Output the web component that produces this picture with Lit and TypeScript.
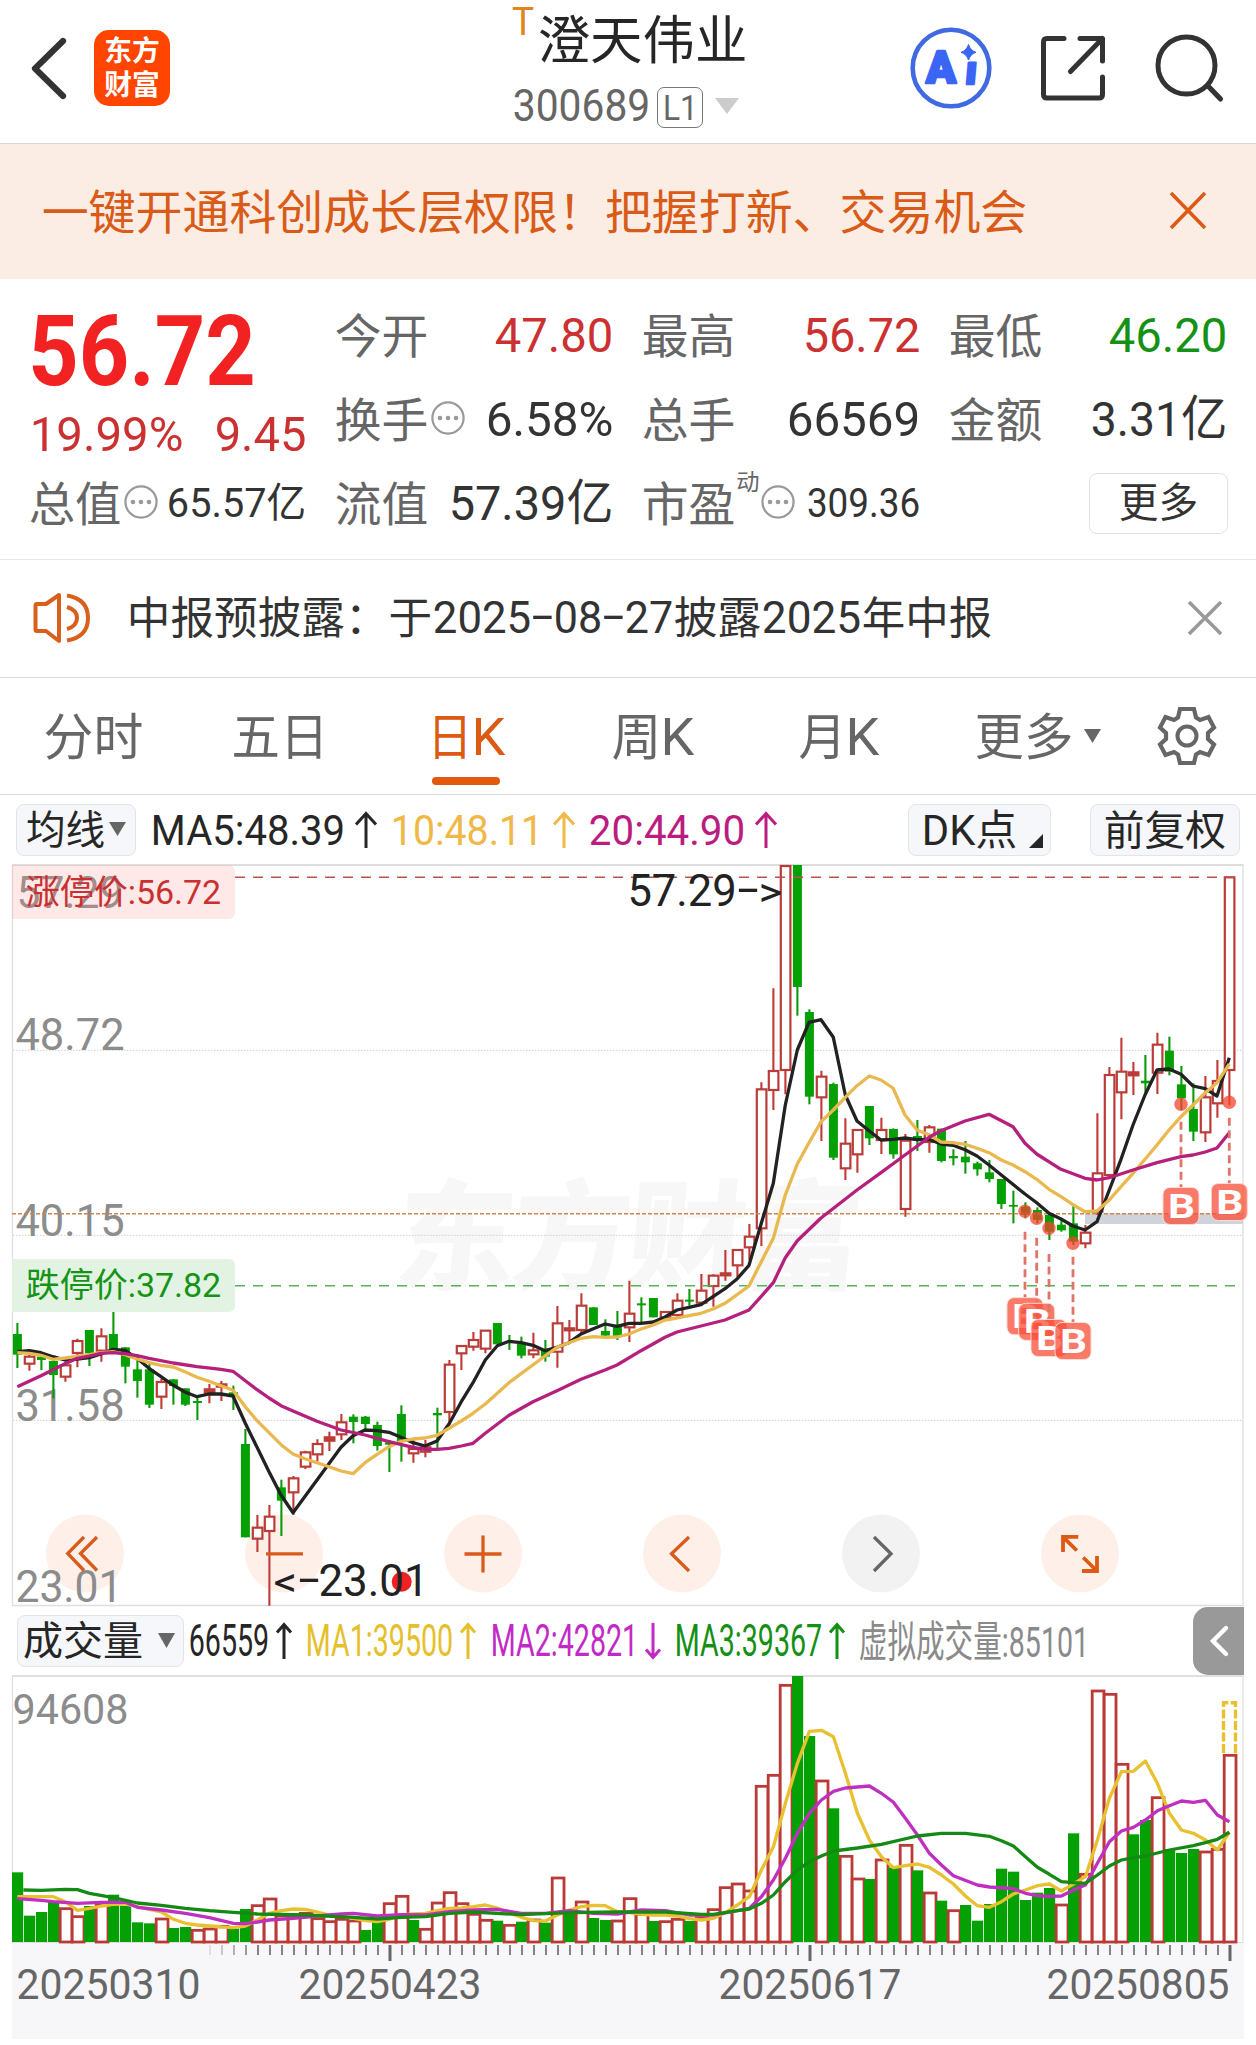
import { LitElement, html, svg, css } from "lit";
import { customElement } from "lit/decorators.js";

/** Single line of text set to an exact width; the box height is the cap height. */
const fit = (text: string, width: number, size: number, cls = "") => {
  const cjk = /^[\u3001-\uffef]+$/.test(text);
  const h = size * (cjk ? 0.76 : 0.711);
  return html`<svg class="fit ${cls}" width=${width} height=${h}>
    <text x=${-size * 0.028} y=${h} font-size=${size} textLength=${width + size * 0.055} lengthAdjust="spacingAndGlyphs">${text}</text>
  </svg>`;
};

const base = css`
  * { box-sizing: border-box; }
  svg { display: block; flex: none; overflow: visible; }
  text { font-family: Roboto, "Noto Sans CJK SC", sans-serif; }
  .fit { fill: currentColor; }
`;

type Pt = [number, number];
const X0 = 17.4;
const STEP = 12;

// colour, body top, body bottom, high, low
type Candle = ["r" | "g", number, number, number, number];
const part = (oy: number, rows: Candle[]): Candle[] =>
  rows.map(([c, a, b, h, l]) => [c, oy + a / 3, oy + b / 3, oy + h / 3, oy + l / 3]);

const candles: Candle[] = [
  ...part(1260, [
    ["g", 222, 284, 189, 324], ["r", 290, 311, 284, 332], ["g", 290, 300, 285, 330], ["g", 303, 345, 300, 415],
    ["r", 316, 350, 305, 365], ["r", 243, 279, 236, 322], ["g", 210, 280, 210, 318], ["r", 229, 272, 205, 305],
    ["g", 222, 268, 138, 270], ["g", 262, 320, 262, 370], ["g", 328, 363, 290, 413], ["g", 328, 434, 310, 444],
    ["r", 366, 410, 356, 447], ["g", 358, 378, 358, 434], ["g", 385, 434, 385, 438], ["g", 423, 429, 408, 480],
    ["r", 388, 398, 372, 430], ["r", 373, 380, 363, 423], ["g", 397, 409, 377, 450], ["g", 552, 832, 507, 832],
    ["r", 803, 836, 765, 876], ["r", 770, 813, 735, 1037], ["g", 682, 722, 659, 828], ["r", 655, 697, 648, 765],
    ["r", 577, 620, 572, 627], ["r", 552, 583, 538, 605], ["r", 532, 542, 515, 573], ["r", 487, 523, 462, 540],
    ["g", 470, 486, 463, 550], ["g", 470, 492, 468, 508], ["g", 495, 558, 485, 572], ["g", 547, 554, 540, 636],
    ["g", 462, 544, 436, 605],
  ]),
  ...part(1140, [
    ["r", 927, 940, 895, 968], ["r", 922, 935, 900, 952], ["g", 819, 826, 803, 930], ["r", 674, 816, 660, 855],
    ["r", 618, 640, 616, 690], ["r", 600, 620, 576, 632], ["r", 572, 626, 570, 640], ["g", 549, 613, 549, 613],
    ["g", 603, 609, 585, 630], ["g", 612, 647, 590, 655], ["r", 631, 643, 578, 655], ["g", 628, 650, 600, 665],
    ["r", 550, 635, 498, 683], ["r", 565, 571, 540, 607], ["r", 497, 570, 460, 580], ["g", 502, 555, 502, 555],
    ["g", 573, 587, 538, 590], ["g", 560, 590, 513, 600], ["r", 521, 562, 422, 606], ["g", 490, 496, 472, 550],
    ["g", 474, 532, 474, 532], ["r", 516, 534, 516, 540], ["r", 482, 525, 460, 530], ["g", 479, 485, 447, 497],
    ["r", 452, 488, 402, 498], ["r", 407, 438, 403, 500], ["r", 400, 406, 330, 422], ["r", 330, 376, 328, 410],
    ["r", 290, 322, 252, 360],
  ]),
  ...part(850, [
    ["r", 718, 1135, 697, 1188], ["r", 663, 720, 415, 780], ["r", 48, 660, 46, 733], ["g", 45, 411, 45, 497],
    ["g", 486, 740, 478, 763], ["r", 680, 742, 662, 873], ["g", 702, 923, 698, 930], ["r", 881, 955, 805, 990],
    ["r", 840, 913, 838, 968], ["g", 768, 865, 768, 885], ["r", 840, 870, 803, 912], ["g", 837, 913, 835, 926],
    ["r", 872, 1077, 852, 1100], ["g", 858, 865, 810, 903], ["r", 832, 876, 825, 908], ["g", 836, 933, 836, 937],
    ["g", 918, 925, 898, 946], ["g", 920, 937, 873, 971], ["g", 940, 958, 935, 977], ["g", 967, 987, 930, 997],
    ["g", 987, 1062, 987, 1077], ["g", 1065, 1070, 1022, 1120], ["g", 1070, 1095, 1057, 1105], ["g", 1080, 1110, 1072, 1120],
    ["g", 1095, 1145, 1090, 1170], ["g", 1124, 1141, 1105, 1145], ["g", 1120, 1175, 1068, 1185], ["r", 1148, 1180, 1125, 1195],
    ["r", 970, 1085, 790, 1095], ["r", 675, 975, 651, 985], ["r", 665, 727, 563, 808], ["r", 667, 676, 636, 735],
    ["g", 692, 700, 615, 728], ["r", 584, 668, 548, 732], ["g", 602, 665, 560, 676], ["g", 703, 745, 648, 780],
    ["g", 777, 845, 700, 873], ["r", 742, 847, 678, 876], ["r", 693, 760, 630, 803], ["r", 82, 660, 82, 765],
  ]),
];

const seg = (ox: number, oy: number, pts: Pt[]): Pt[] => pts.map(([x, y]) => [ox + x / 3, oy + y / 3]);

const ma5: Pt[] = [
  ...seg(0, 1260, [[52, 275], [88, 272], [123, 278], [159, 290], [195, 300], [232, 297], [268, 293], [303, 282], [339, 268], [375, 271], [411, 295], [447, 325], [483, 350], [520, 376], [555, 396], [591, 410], [627, 402], [663, 402], [699, 408], [736, 490], [807, 635], [843, 705], [879, 758], [951, 660], [1023, 562], [1059, 527], [1095, 510], [1131, 512], [1167, 517], [1203, 532]]),
  ...seg(400, 1140, [[39, 908], [75, 918], [111, 903], [147, 852], [184, 785], [219, 728], [256, 660], [292, 617], [327, 604], [363, 608], [399, 616], [435, 632], [471, 622], [507, 608], [543, 582], [580, 566], [615, 552], [651, 559], [687, 550], [723, 550], [760, 546], [795, 531], [831, 510], [867, 502], [903, 494], [939, 470], [975, 446], [1012, 416]]),
  ...seg(740, 850, [[27, 1246], [64, 1120], [100, 1000], [136, 765], [172, 600], [207, 517], [243, 509], [280, 562], [316, 735], [351, 813], [388, 843], [423, 870], [459, 868], [495, 864], [531, 869], [567, 868], [603, 882], [639, 886], [675, 899], [711, 918], [747, 945], [784, 975], [855, 1032], [890, 1058], [927, 1090], [963, 1107], [999, 1128], [1035, 1140], [1071, 1115], [1108, 1020], [1143, 928], [1179, 825], [1215, 735], [1251, 660], [1287, 657], [1323, 673], [1359, 708], [1396, 716], [1431, 738], [1468, 623]]),
];
const ma10: Pt[] = [
  ...seg(0, 1260, [[52, 278], [88, 280], [123, 286], [159, 298], [195, 294], [232, 289], [268, 284], [303, 278], [339, 275], [375, 284], [411, 297], [447, 308], [483, 316], [520, 321], [555, 335], [591, 352], [627, 364], [663, 377], [699, 391], [736, 440], [771, 482], [807, 518], [843, 554], [879, 582], [915, 596], [951, 608], [987, 620], [1023, 633], [1059, 641], [1095, 608], [1131, 583], [1167, 560], [1203, 544]]),
  ...seg(400, 1140, [[39, 897], [75, 894], [111, 886], [147, 865], [184, 843], [219, 820], [256, 792], [327, 728], [435, 648], [471, 622], [507, 608], [543, 595], [580, 590], [615, 592], [651, 591], [687, 582], [723, 567], [760, 555], [795, 540], [831, 534], [867, 527], [903, 520], [939, 507], [975, 490]]),
  ...seg(740, 850, [[27, 1308], [64, 1235], [100, 1165], [136, 1035], [172, 942], [207, 878], [243, 815], [280, 780], [316, 742], [351, 707], [388, 678], [423, 690], [459, 714], [495, 795], [531, 840], [567, 854], [603, 876], [639, 878], [675, 883], [711, 895], [747, 908], [784, 930], [819, 945], [855, 965], [890, 988], [927, 1018], [963, 1040], [999, 1064], [1035, 1085], [1071, 1083], [1108, 1050], [1143, 1010], [1179, 970], [1215, 928], [1251, 885], [1287, 840], [1323, 800], [1359, 765], [1396, 728], [1431, 698], [1468, 642]]),
];
const ma20: Pt[] = [
  ...seg(0, 1260, [[52, 380], [123, 347], [195, 311], [232, 295], [268, 288], [303, 280], [339, 278], [375, 281], [411, 287], [447, 295], [520, 309], [591, 320], [663, 328], [699, 334], [736, 362], [771, 389], [807, 414], [843, 437], [879, 453], [951, 484], [1023, 510], [1095, 525], [1167, 545]]),
  ...seg(400, 1140, [[39, 922], [75, 928], [111, 928], [147, 925], [184, 918], [219, 910], [256, 880], [327, 826], [399, 785], [471, 752], [543, 718], [615, 690], [651, 675], [723, 632], [795, 592], [831, 576], [903, 558], [975, 540]]),
  ...seg(740, 850, [[27, 1380], [100, 1298], [136, 1223], [172, 1172], [243, 1104], [351, 1020], [423, 968], [495, 915], [567, 862], [603, 842], [675, 813], [747, 793], [819, 830], [855, 880], [890, 912], [963, 958], [1035, 985], [1071, 990], [1108, 983], [1179, 960], [1251, 938], [1323, 920], [1359, 915], [1396, 906], [1431, 894], [1468, 848]]),
];

// Volume bar tops, measured in thirds of a pixel below y = 1600.
const volumeTops = [
  817, 947, 936, 905, 923, 947, 918, 912, 884, 918, 967, 970, 954, 984, 981, 988, 984, 976, 986, 927, 914, 894, 945, 948, 937, 953, 962, 955,
  960, 990, 966, 908, 886, 960, 985, 906, 875, 908, 940, 958, 962, 973, 965, 957, 968, 831, 937, 903, 954, 960, 960, 893, 940, 963, 962, 955,
  963, 950, 926, 860, 849, 870, 556, 523, 253, 228, 408, 540, 625, 766, 834, 837, 777, 803, 733, 811, 876, 902, 929, 915, 962, 912, 806, 815,
  900, 878, 864, 912, 700, 820, 270, 280, 490, 703, 660, 590, 747, 759, 747, 753, 745, 463,
];
const volumeGreen = new Set([
  0, 1, 2, 3, 6, 8, 9, 10, 11, 13, 14, 18, 19, 29, 30, 33, 40, 42, 44, 46, 48, 49, 53, 56, 65, 66, 68, 71, 73, 75, 77, 79, 80, 81, 82, 83, 84,
  85, 86, 88, 93, 94, 96, 97, 98,
]);
const vol = (pts: Pt[]): Pt[] => pts.map(([i, y]) => [X0 + i * STEP, 1600 + y / 3]);
const vma1 = vol([[0, 890], [3, 890], [4, 905], [5, 931], [6, 925], [7, 918], [8, 913], [9, 912], [10, 920], [11, 928], [12, 936], [13, 958], [14, 970], [15, 975], [16, 978], [17, 981], [18, 983], [19, 978], [20, 960], [21, 940], [22, 932], [23, 927], [24, 928], [25, 936], [26, 945], [27, 948], [28, 955], [29, 962], [30, 965], [31, 958], [32, 944], [33, 942], [34, 940], [35, 932], [36, 925], [37, 924], [38, 920], [39, 915], [40, 924], [41, 940], [42, 952], [43, 962], [44, 963], [45, 945], [46, 930], [47, 920], [48, 916], [49, 917], [50, 935], [51, 938], [52, 943], [53, 945], [54, 945], [55, 948], [56, 956], [57, 960], [58, 955], [59, 938], [60, 915], [61, 890], [62, 810], [63, 740], [64, 610], [65, 490], [66, 394], [67, 391], [68, 410], [69, 520], [70, 640], [71, 720], [72, 770], [73, 803], [74, 797], [75, 792], [76, 802], [77, 825], [78, 852], [79, 888], [80, 917], [81, 922], [82, 905], [83, 882], [84, 870], [85, 857], [86, 852], [87, 873], [88, 852], [89, 830], [90, 720], [91, 595], [92, 515], [93, 514], [94, 483], [95, 550], [96, 640], [97, 690], [98, 700], [99, 720], [100, 750], [101, 697]]);
const vma2 = vol([[0, 896], [2, 901], [3, 905], [5, 910], [7, 907], [9, 907], [10, 922], [12, 930], [14, 940], [16, 953], [18, 970], [19, 971], [20, 966], [21, 960], [23, 955], [25, 948], [27, 942], [28, 940], [30, 948], [32, 944], [34, 945], [36, 935], [38, 930], [40, 928], [42, 940], [44, 940], [46, 932], [48, 940], [50, 942], [52, 930], [54, 932], [56, 945], [58, 945], [60, 932], [61, 925], [62, 890], [63, 840], [64, 775], [65, 700], [66, 640], [67, 600], [68, 574], [69, 564], [71, 558], [72, 580], [73, 607], [74, 655], [75, 705], [76, 760], [77, 795], [78, 827], [80, 855], [81, 861], [83, 866], [84, 880], [85, 887], [86, 889], [87, 888], [88, 870], [89, 855], [90, 790], [91, 725], [92, 693], [93, 682], [94, 660], [95, 632], [96, 617], [97, 603], [98, 607], [99, 601], [100, 645], [101, 665]]);
const vma3 = vol([[0.5, 870], [2, 871], [4, 868], [5, 869], [6, 880], [8, 893], [10, 909], [12, 916], [14, 925], [16, 932], [18, 937], [20, 942], [24, 945], [28, 952], [30, 957], [32, 952], [34, 950], [36, 940], [38, 936], [42, 944], [46, 938], [50, 936], [54, 936], [57, 943], [58, 943], [60, 932], [61, 927], [62, 910], [63, 885], [64, 845], [65, 810], [66, 785], [67, 768], [68, 753], [70, 744], [72, 733], [75, 708], [77, 700], [79, 700], [81, 709], [82, 722], [83, 738], [84, 770], [85, 802], [86, 823], [87, 845], [88, 848], [89, 850], [90, 825], [91, 798], [92, 780], [93, 773], [94, 768], [96, 750], [98, 737], [99, 728], [100, 718], [101, 697]]);

const line = (pts: Pt[], color: string, w = 3.3) =>
  svg`<polyline points=${pts.map((p) => p.map((n) => n.toFixed(1)).join(",")).join(" ")} fill="none" stroke=${color} stroke-width=${w} stroke-linejoin="round" />`;

const label = (t: string, x: number, y: number, w: number, size: number, color: string) =>
  svg`<text x=${x - size * 0.035} y=${y} font-size=${size} textLength=${w + size * 0.07} lengthAdjust="spacingAndGlyphs" fill=${color}>${t}</text>`;

// dot x, dot y, dashed line start, badge top
const buys: [number, number, number, number][] = [
  [1025, 1211.3, 1231.7, 1297.7], [1036.7, 1218.3, 1237.7, 1303.3], [1049, 1228.3, 1254, 1319.5], [1073, 1243.3, 1256.7, 1322.5],
  [1181, 1104.3, 1121.7, 1187.5], [1229.3, 1102.3, 1117.7, 1183.5],
];

@customElement("price-chart")
export class PriceChart extends LitElement {
  static styles = [base, css`
    :host { display: block; }
    .mark { font-weight: 900; font-family: "Noto Sans CJK SC", sans-serif; }
    .b { font-weight: 700; }
  `];

  private candle([c, a, b, h, l]: Candle, i: number) {
    const x = X0 + i * STEP;
    if (c === "g") {
      return svg`<path d="M${x} ${h}V${l}" stroke="#0a9a0a" stroke-width="2.1" /><rect x=${x - 4.5} y=${a} width="9" height=${b - a} fill="#04a004" />`;
    }
    return svg`<path d="M${x} ${h}V${a}M${x} ${b}V${l}" stroke="#c23a36" stroke-width="2.1" />
      <rect x=${x - 4.6} y=${a} width="9.6" height=${Math.max(b - a, 1.6)} fill=${b - a < 3.6 ? "#c23a36" : "#fff"} stroke="#b93c38" stroke-width="2.2" />`;
  }

  render() {
    return html`<svg width="1256" height="741" viewBox="0 865 1256 741">
      <text class="mark" x="398" y="1280" font-size="119" textLength="466" fill="#f7f7f7" transform="translate(107 0) skewX(-5)">东方财富</text>
      <path d="M12.5 865V1605.5H1243V865" fill="none" stroke="#dedede" stroke-width="1.3" />
      <path d="M12 865H1243.5" stroke="#dedede" stroke-width="2" />
      ${[1050.3, 1235.3, 1420.3].map((y) => svg`<path d="M13 ${y}H1243" stroke="#cfcfcf" stroke-width="1" stroke-dasharray="1.5 1.5" />`)}
      <rect x="1085" y="1213.5" width="158" height="10.5" fill="#d0d3da" />
      ${[85, 284, 483, 682, 881, 1080].map((x) => svg`<circle cx=${x} cy="1553.5" r="39" fill=${x === 881 ? "#f2f2f2" : "#fef0e9"} />`)}
      ${label("57.29", 18, 907.5, 104, 44, "#8c8c8c")}
      ${label("48.72", 17, 1049.5, 106, 44, "#8c8c8c")}
      ${label("40.15", 17, 1235.5, 106, 44, "#8c8c8c")}
      ${label("31.58", 17, 1420.5, 106, 44, "#8c8c8c")}
      ${label("23.01", 17, 1601.5, 104, 44, "#8c8c8c")}
      ${candles.map((c, i) => this.candle(c, i))}
      <path d="M12 865H229a6 6 0 0 1 6 6V913a6 6 0 0 1-6 6H12Z" fill="#ff8a8a" fill-opacity=".2" />
      <path d="M12 1259H229a6 6 0 0 1 6 6V1306a6 6 0 0 1-6 6H12Z" fill="#e3f3e3" />
      ${label("涨停价:56.72", 27, 903.7, 193, 34, "#c93030")}
      ${label("跌停价:37.82", 27, 1296.7, 193, 34, "#149414")}
      <path d="M235 877.3H1243" stroke="#b9504c" stroke-width="1.5" stroke-dasharray="10 8" />
      <path d="M235 1285.7H1243" stroke="#58b05c" stroke-width="1.6" stroke-dasharray="10 8" />
      <path d="M12 1213.7H1243" stroke="#cf8450" stroke-width="1.6" stroke-dasharray="4 2" />
      ${line(ma5, "#222")}${line(ma10, "#e9b84f")}${line(ma20, "#b4207c")}
      ${label("57.29", 629, 906, 106, 45, "#222")}
      ${label("-", 739, 904, 18, 45, "#222")}${label(">", 760, 906, 21, 40, "#222")}
      ${label("<", 275, 1595.5, 21, 40, "#222")}${label("-", 300, 1594, 18, 45, "#222")}
      <circle cx="401.7" cy="1581.7" r="10" fill="#ee2222" />
      ${label("23.01", 320, 1595.7, 107, 45, "#222")}
      ${buys.map(([x, y, s, t]) => svg`
        <path d="M${x} ${s}V${t}" stroke="#df7468" stroke-width="2.8" stroke-dasharray="8 4.5" />
        <circle cx=${x} cy=${y} r="6.7" fill="#f4442e" fill-opacity=".75" />
        <rect x=${x - 18} y=${t} width="36" height="37" rx="7" fill="#f8503a" fill-opacity=".76" stroke="#ffd9d2" stroke-width="1" />
        <text class="b" x=${x - 13} y=${t + 30} font-size="33" textLength="27" lengthAdjust="spacingAndGlyphs" fill="#fff">B</text>`)}
      <g fill="none" stroke="#d95b1c" stroke-width="3.300">
        <path d="M84 1537L67.7 1553.5L84 1570.5M97 1537L80.5 1553.5L97 1570.5M266 1553.8H303M464.5 1554H501.5M483 1535.5V1572.5M689 1537L671.5 1553.7L689 1571" />
        <path d="M1063 1552V1536.800H1078.300M1063 1536.800L1076.800 1550.500M1097 1556V1571H1082M1097 1571L1083.200 1557.500" stroke="#dd5a12" stroke-width="3.800" />
        <path d="M874 1537L891 1553.7L874 1571" stroke="#666" />
      </g>
    </svg>`;
  }
}

@customElement("volume-chart")
export class VolumeChart extends LitElement {
  static styles = [base, css`:host { display: block; }`];

  render() {
    return html`<svg width="1256" height="369" viewBox="0 1676 1256 369">
      <rect x="12" y="1943" width="1232" height="96" fill="#f7f7fa" />
      <path d="M12 1676H1243.5" stroke="#e0e0e0" stroke-width="2" />
      <path d="M12.5 1676V1942.5H1243V1676" fill="none" stroke="#dedede" stroke-width="1.2" />
      ${label("94608", 14, 1724, 113, 43, "#8c8c8c")}
      <path d="M1223.5 1753V1702.8H1235.5V1753" fill="none" stroke="#e8c030" stroke-width="3.400" stroke-dasharray="9 2.500" />
      ${volumeTops.map((t, i) => {
        const x = X0 + i * STEP;
        const y = 1600 + t / 3;
        return volumeGreen.has(i)
          ? svg`<rect x=${x - 5.4} y=${y} width="11.2" height=${1942 - y} fill="#04a004" />`
          : svg`<rect x=${x - 5.2} y=${y + 1} width="11.8" height=${1941 - y} fill="#fff" stroke="#b93a36" stroke-width="2.8" />`;
      })}
      ${line(vma1, "#e8c030")}${line(vma2, "#c030c0")}${line(vma3, "#148a14")}
      ${Array.from({ length: 86 }, (_, k) => k + 16).map((i) => {
        const major = i === 31 || i === 66 || i === 101;
        return svg`<path d="M${18 + i * STEP} 1945V${major ? 1961 : 1955}" stroke="#666" stroke-width=${major ? 3 : 1.6} stroke-opacity=${Math.min(1, (i - 15) / 5)} />`;
      })}
      ${label("20250310", 18, 1999, 181, 42, "#666")}
      ${label("20250423", 300, 1999, 180, 42, "#666")}
      ${label("20250617", 720, 1999, 180, 42, "#666")}
      ${label("20250805", 1048, 1999, 180, 42, "#666")}
    </svg>`;
  }
}

const info = html`<svg class="info" width="34" height="34" viewBox="0 0 34 34">
  <circle cx="17" cy="17" r="15.6" fill="none" stroke="#999" stroke-width="2.200" />
  <g fill="#999"><circle cx="9" cy="17" r="2.3" /><circle cx="17" cy="17" r="2.3" /><circle cx="25" cy="17" r="2.3" /></g>
</svg>`;
const arrow = (w: number, down = false) => html`<svg class=${down ? "down" : ""} width=${w} height="36" viewBox="0 0 ${w} 36">
  <path d="M${w / 2} 36V1.5M1 ${w / 2 + 1.5}L${w / 2} 1.5L${w - 1} ${w / 2 + 1.5}" fill="none" stroke="currentColor" stroke-width="3" />
</svg>`;
const triangle = (w: number, h: number) => html`<svg width=${w} height=${h}><path d="M0 0H${w}L${w / 2} ${h}Z" fill="currentColor" /></svg>`;

@customElement("app-root")
export class AppRoot extends LitElement {
  static styles = [base, css`
    :host { display: block; width: 1256px; height: 2045px; overflow: hidden; background: #fff; color: #333; }
    .row, header, .banner, .notice, .tabs, .ma, .vol, .cell { display: flex; align-items: center; }
    header { height: 144px; border-bottom: 1px solid #d5d7d5; padding: 0 32px 7px 31px; }
    .logo { width: 76px; height: 76px; margin-left: 28px; border-radius: 15px; background: #ff4500; color: #fff; display: flex; flex-direction: column; align-items: center; justify-content: center; gap: 12.5px; font-weight: 700; }
    .title { margin-left: 343px; align-self: flex-start; }
    .name { height: 78px; color: #262626; }
    .t { color: #e08420; align-self: flex-start; margin-top: 8px; }
    .name .fit { margin-left: 6px; }
    .t .fit { margin-left: 0; }
    .code { height: 55px; color: #666; padding: 1px 0 0 1px; }
    .l1 { width: 46px; height: 41px; margin: 2px 12px 0 8px; border: 1.5px solid #777; border-radius: 7px; display: flex; align-items: center; justify-content: center; }
    .tri-light { color: #ccc; }
    .tools { margin-left: auto; display: flex; align-items: center; }
    .share { margin: 0 50px 0 48px; }
    .ai { font-weight: 900; }
    .banner { height: 135px; background: #fcede4; color: #d95b17; padding: 0 50px 2px 43px; justify-content: space-between; }
    .quote { height: 281px; border-bottom: 1px solid #e8e8e8; padding: 14px 30px 0; display: grid; grid-template-columns: 275px repeat(3, 276px); grid-template-rows: repeat(3, 84px); column-gap: 31px; }
    .price { grid-row: span 2; padding: 22px 0 0 1px; color: #cc3131; }
    .big { color: #f22222; font-weight: 700; }
    .change { display: flex; justify-content: space-between; margin-top: 31px; }
    .cell .label { color: #666; }
    .cell > :last-child { margin-left: auto; }
    .cell .info { margin-left: 4px; margin-top: -3px; }
    .red { color: #cc3131; }
    .green { color: #159215; }
    .dyn { color: #666; align-self: flex-start; margin: 12px 0 0 3px; }
    .dyn + .info { margin-left: 2px !important; }
    .more { width: 139px; height: 61px; margin-right: -2px; border: 1.5px solid #e2e2e2; border-radius: 8px; display: flex; align-items: center; justify-content: center; padding-bottom: 2px; }
    .notice { height: 118px; border-bottom: 1px solid #d6d6d6; padding: 0 34px 2px 33px; }
    .notice .msg { display: flex; align-items: center; margin-left: 37px; }
    .notice .close { margin-left: auto; }
    .g { margin-left: 3px; }
    .g.dash { padding-bottom: 3px; }
    .tabs { height: 117px; border-bottom: 1px solid #d6d6d6; color: #666; }
    .tab { width: 186.5px; height: 100%; display: grid; grid-template-rows: 17px 1fr 17px; justify-items: center; align-items: center; }
    .tab .row { gap: 2px; grid-row: 2; }
    .tab .row.wide { gap: 12px; padding-left: 26px; }
    .active { color: #dc5a14; }
    .bar { width: 68px; height: 8px; border-radius: 4px; background: #e2580c; align-self: start; grid-row: 3; }
    .gear { margin: 0 0 0 39px; }
    .ma { height: 70px; padding: 0 16px 0 16px; color: #262626; }
    .btn { height: 52px; border: 1.5px solid #e2e4e8; border-radius: 8px; background: #f6f7fa; display: flex; align-items: center; color: #262626; }
    .ma .btn:first-child { width: 120px; padding: 0 0 2px 10px; gap: 5px; margin-right: 16px; }
    .ma .dk { width: 143px; padding-left: 14px; margin-left: auto; gap: 13px; }
    .ma .fq { width: 150px; justify-content: center; margin-left: 39px; padding-bottom: 1px; }
    .grey { color: #666; }
    .ma .fit + svg.corner { align-self: flex-end; margin: 0 0 7px; }
    .c10 { color: #f0b848; margin-left: 15px; }
    .c20 { color: #bb1c80; margin-left: 15px; }
    .ma .fit + svg { margin-left: 11px; }
    .vol { height: 70px; padding: 0 12px 0 17px; color: #262626; }
    .vol .btn { width: 167px; padding: 0 0 2px 6px; gap: 16px; margin-right: 6px; }
    .vol .fit + svg { margin-left: 8px; }
    .v1 { color: #e6c02c; margin-left: 15px; }
    .v2 { color: #c22ac8; margin-left: 16px; }
    .v3 { color: #149014; margin-left: 15px; }
    .v4 { color: #8a8a8a; margin-left: 15px; }
    .down { transform: rotate(180deg); }
    .fold { width: 51px; height: 68px; margin-left: auto; border-radius: 15px 0 0 15px; background: #999; display: flex; align-items: center; justify-content: center; }
  `];

  private tab(parts: unknown, active = false, wide = false) {
    return html`<div class="tab ${active ? "active" : ""}"><div class="row ${wide ? "wide" : ""}">${parts}</div>${active ? html`<div class="bar"></div>` : ""}</div>`;
  }

  render() {
    return html`
      <header>
        <svg width="35" height="61" viewBox="0 0 35 61"><path d="M32 3L4 30.5L32 58" fill="none" stroke="#333" stroke-width="6.200" stroke-linecap="round" stroke-linejoin="round" /></svg>
        <div class="logo">${fit("东方", 54, 28)}${fit("财富", 54, 28)}</div>
        <div class="title">
          <div class="row name"><span class="t">${fit("T", 20, 38)}</span>${fit("澄天伟业", 207, 52)}</div>
          <div class="row code">${fit("300689", 135, 44)}<span class="l1">${fit("L1", 33, 35)}</span><span class="tri-light">${triangle(24, 16)}</span></div>
        </div>
        <div class="tools">
          <svg width="82" height="82" viewBox="0 0 82 82">
            <circle cx="41" cy="41" r="38.3" fill="none" stroke="#4169e1" stroke-width="4.6" />
            <g class="ai" fill="#3b66f5" stroke="#3b66f5" stroke-width="2.600" stroke-linejoin="round">
              <text x="16" y="55.500" font-size="44" textLength="30" lengthAdjust="spacingAndGlyphs">A</text>
              <text x="54.500" y="57.500" font-size="40" transform="translate(5 0) skewX(-5)">ı</text>
            </g>
            <path d="M58.500 17.500Q60.500 23.500 66 25.300Q60.500 27.100 58.500 33Q56.500 27.100 51 25.300Q56.500 23.500 58.500 17.500Z" fill="#3b66f5" stroke="#3b66f5" stroke-width="1" />
          </svg>
          <svg class="share" width="66" height="66" viewBox="0 0 66 66"><path d="M24 3.5H7Q3.500 3.500 3.500 7V59.500Q3.500 63 7 63H59Q62.500 63 62.500 59.500V42M40 3.500H62.500V26M62.500 3.500L30.500 36.500" fill="none" stroke="#333" stroke-width="5" stroke-linecap="round" stroke-linejoin="round" /></svg>
          <svg width="68" height="68" viewBox="0 0 68 68"><circle cx="30.500" cy="31.500" r="28.500" fill="none" stroke="#333" stroke-width="5" /><path d="M52 52L64.500 65" stroke="#333" stroke-width="5.200" stroke-linecap="round" /></svg>
        </div>
      </header>
      <div class="banner">
        ${fit("一键开通科创成长层权限！把握打新、交易机会", 983, 47)}
        <svg width="36" height="37" viewBox="0 0 36 37"><path d="M1 1L35 36M35 1L1 36" stroke="#dc5a14" stroke-width="3.600" /></svg>
      </div>
      <section class="quote">
        <div class="price">
          <div class="big">${fit("56.72", 222, 98.500)}</div>
          <div class="change">${fit("19.99%", 151, 49)}${fit("9.45", 89, 49)}</div>
        </div>
        <div class="cell">${fit("今开", 91, 47, "label")}${fit("47.80", 116, 48.500, "red")}</div>
        <div class="cell">${fit("最高", 91, 47, "label")}${fit("56.72", 115, 48.500, "red")}</div>
        <div class="cell">${fit("最低", 91, 47, "label")}${fit("46.20", 116, 48.500, "green")}</div>
        <div class="cell">${fit("换手", 91, 47, "label")}${info}${fit("6.58%", 125, 48.500)}</div>
        <div class="cell">${fit("总手", 91, 47, "label")}${fit("66569", 131, 48.500)}</div>
        <div class="cell">${fit("金额", 91, 47, "label")}${fit("3.31亿", 134, 48.500)}</div>
        <div class="cell">${fit("总值", 90, 47, "label")}${info}${fit("65.57亿", 137, 41)}</div>
        <div class="cell">${fit("流值", 91, 47, "label")}${fit("57.39亿", 162, 48.500)}</div>
        <div class="cell">${fit("市盈", 91, 47, "label")}<span class="dyn">${fit("动", 22, 23)}</span>${info}${fit("309.36", 111, 40)}</div>
        <div class="cell"><span class="more">${fit("更多", 77, 41)}</span></div>
      </section>
      <div class="notice">
        <svg width="58" height="50" viewBox="0 0 58 50"><path d="M2.500 12.500Q2.500 11 4 11H13L26 2V48L13 38H4Q2.500 38 2.500 36.500ZM34 2.500Q55 6 55 25Q55 44 34 47.500M34 14Q44 17 44 25Q44 33 34 36" fill="none" stroke="#d9601c" stroke-width="4" stroke-linejoin="round" /></svg>
        <div class="msg">${fit("中报预披露：于", 303, 44)}<span class="g">${fit("2025", 96, 44)}</span><span class="g dash">${fit("-", 19, 44)}</span><span class="g">${fit("08", 46, 44)}</span><span class="g dash">${fit("-", 19, 44)}</span><span class="g">${fit("27", 46, 44)}</span><span class="g">${fit("披露", 85, 44)}</span><span class="g">${fit("2025", 97, 44)}</span><span class="g">${fit("年中报", 128, 44)}</span></div>
        <svg class="close" width="34" height="34" viewBox="0 0 34 34"><path d="M1 1L33 33M33 1L1 33" stroke="#999" stroke-width="3.500" /></svg>
      </div>
      <nav class="tabs">
        ${this.tab(fit("分时", 97, 50))}
        ${this.tab(fit("五日", 94, 50))}
        ${this.tab(html`${fit("日", 42, 50)}${fit("K", 31, 52)}`, true)}
        ${this.tab(html`${fit("周", 47, 50)}${fit("K", 31, 52)}`)}
        ${this.tab(html`${fit("月", 45, 50)}${fit("K", 31, 52)}`)}
        ${this.tab(html`${fit("更多", 96, 50)}${triangle(17, 14)}`, false, true)}
        <svg class="gear" width="58" height="58" viewBox="-29 -29 58 58"><path d="M-7 -27H7L9 -18.500L13 -16L21.500 -19L27 -8.500L21 -3V3L27 8.500L21.500 19L13 16L9 18.500L7 27H-7L-9 18.500L-13 16L-21.500 19L-27 8.500L-21 3V-3L-27 -8.500L-21.500 -19L-13 -16L-9 -18.500Z" fill="none" stroke="#666" stroke-width="4.200" /><circle r="9.500" fill="none" stroke="#666" stroke-width="4" /></svg>
      </nav>
      <div class="ma">
        <span class="btn">${fit("均线", 77, 40)}<span class="grey">${triangle(17, 14)}</span></span>
        ${fit("MA5:48.39", 192, 42.500)}${arrow(22)}
        <span class="row c10">${fit("10:48.11", 150, 42.500)}${arrow(22)}</span>
        <span class="row c20">${fit("20:44.90", 154, 42.500)}${arrow(22)}</span>
        <span class="btn dk">${fit("DK点", 93, 42)}<svg class="corner" width="14" height="14"><path d="M14 0V14H0Z" fill="#262626" /></svg></span>
        <span class="btn fq">${fit("前复权", 120, 41)}</span>
      </div>
      <price-chart></price-chart>
      <div class="vol">
        <span class="btn">${fit("成交量", 118, 40)}<span class="grey">${triangle(17, 15)}</span></span>
        ${fit("66559", 78, 44)}${arrow(16)}
        <span class="row v1">${fit("MA1:39500", 145, 44)}${arrow(16)}</span>
        <span class="row v2">${fit("MA2:42821", 145, 44)}${arrow(16, true)}</span>
        <span class="row v3">${fit("MA3:39367", 145, 44)}${arrow(16)}</span>
        <span class="v4">${fit("虚拟成交量:85101", 228, 43)}</span>
        <span class="fold"><svg width="18" height="30" viewBox="0 0 18 30"><path d="M16 2L3 15L16 28" fill="none" stroke="#fff" stroke-width="4.400" stroke-linecap="round" /></svg></span>
      </div>
      <volume-chart></volume-chart>
    `;
  }
}
